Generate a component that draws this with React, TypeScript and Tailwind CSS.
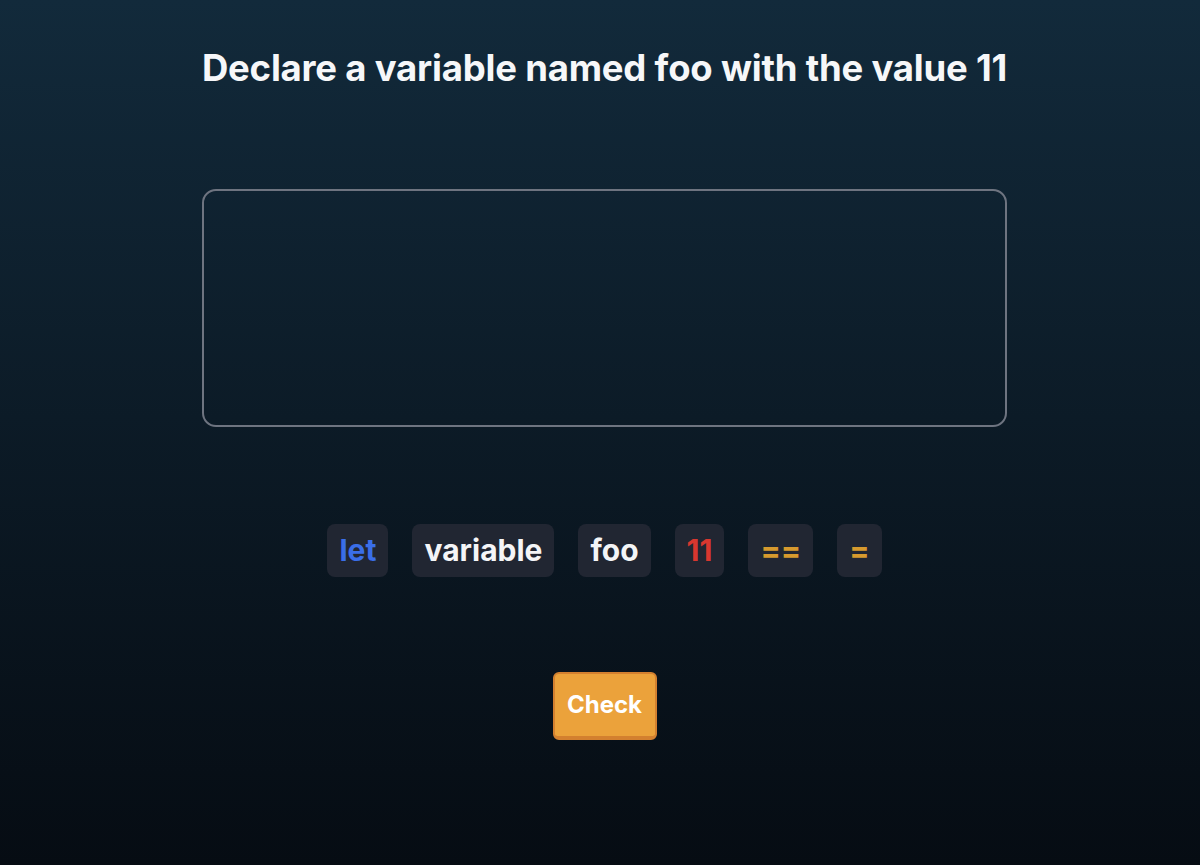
const tokens = [
  { text: 'let', color: 'text-[#3a6ee8]' },
  { text: 'variable', color: 'text-[#f4f5f7]' },
  { text: 'foo', color: 'text-[#f4f5f7]' },
  { text: '11', color: 'text-[#d8372f]' },
  { text: '==', color: 'text-[#d79a2e]' },
  { text: '=', color: 'text-[#d79a2e]' },
]

export default function App() {
  return (
    <div className="min-h-[865px] w-full pl-[9px] bg-gradient-to-b from-[#122a3b] to-[#060c13] font-['Inter',sans-serif] flex flex-col items-center">
      <h1 className="mt-[46px] text-[36.5px] leading-[44px] font-bold text-[#f6f7f9] tracking-[-0.2px]">
        Declare a variable named foo with the value 11
      </h1>

      <div className="mt-[99px] w-[805px] h-[238px] rounded-[14px] border-[2.5px] border-[#6e7480]" />

      <div className="mt-[97px] flex gap-6">
        {tokens.map((t) => (
          <button
            key={t.text}
            className={`h-[53px] px-3 rounded-lg bg-[#212632] text-[30px] font-bold ${t.color}`}
          >
            {t.text}
          </button>
        ))}
      </div>

      <button className="mt-[95px] w-[104px] h-[68px] rounded-md bg-[#eba23b] border-2 border-b-4 border-[#d3802f] text-white text-[24px] font-bold">
        Check
      </button>
    </div>
  )
}
